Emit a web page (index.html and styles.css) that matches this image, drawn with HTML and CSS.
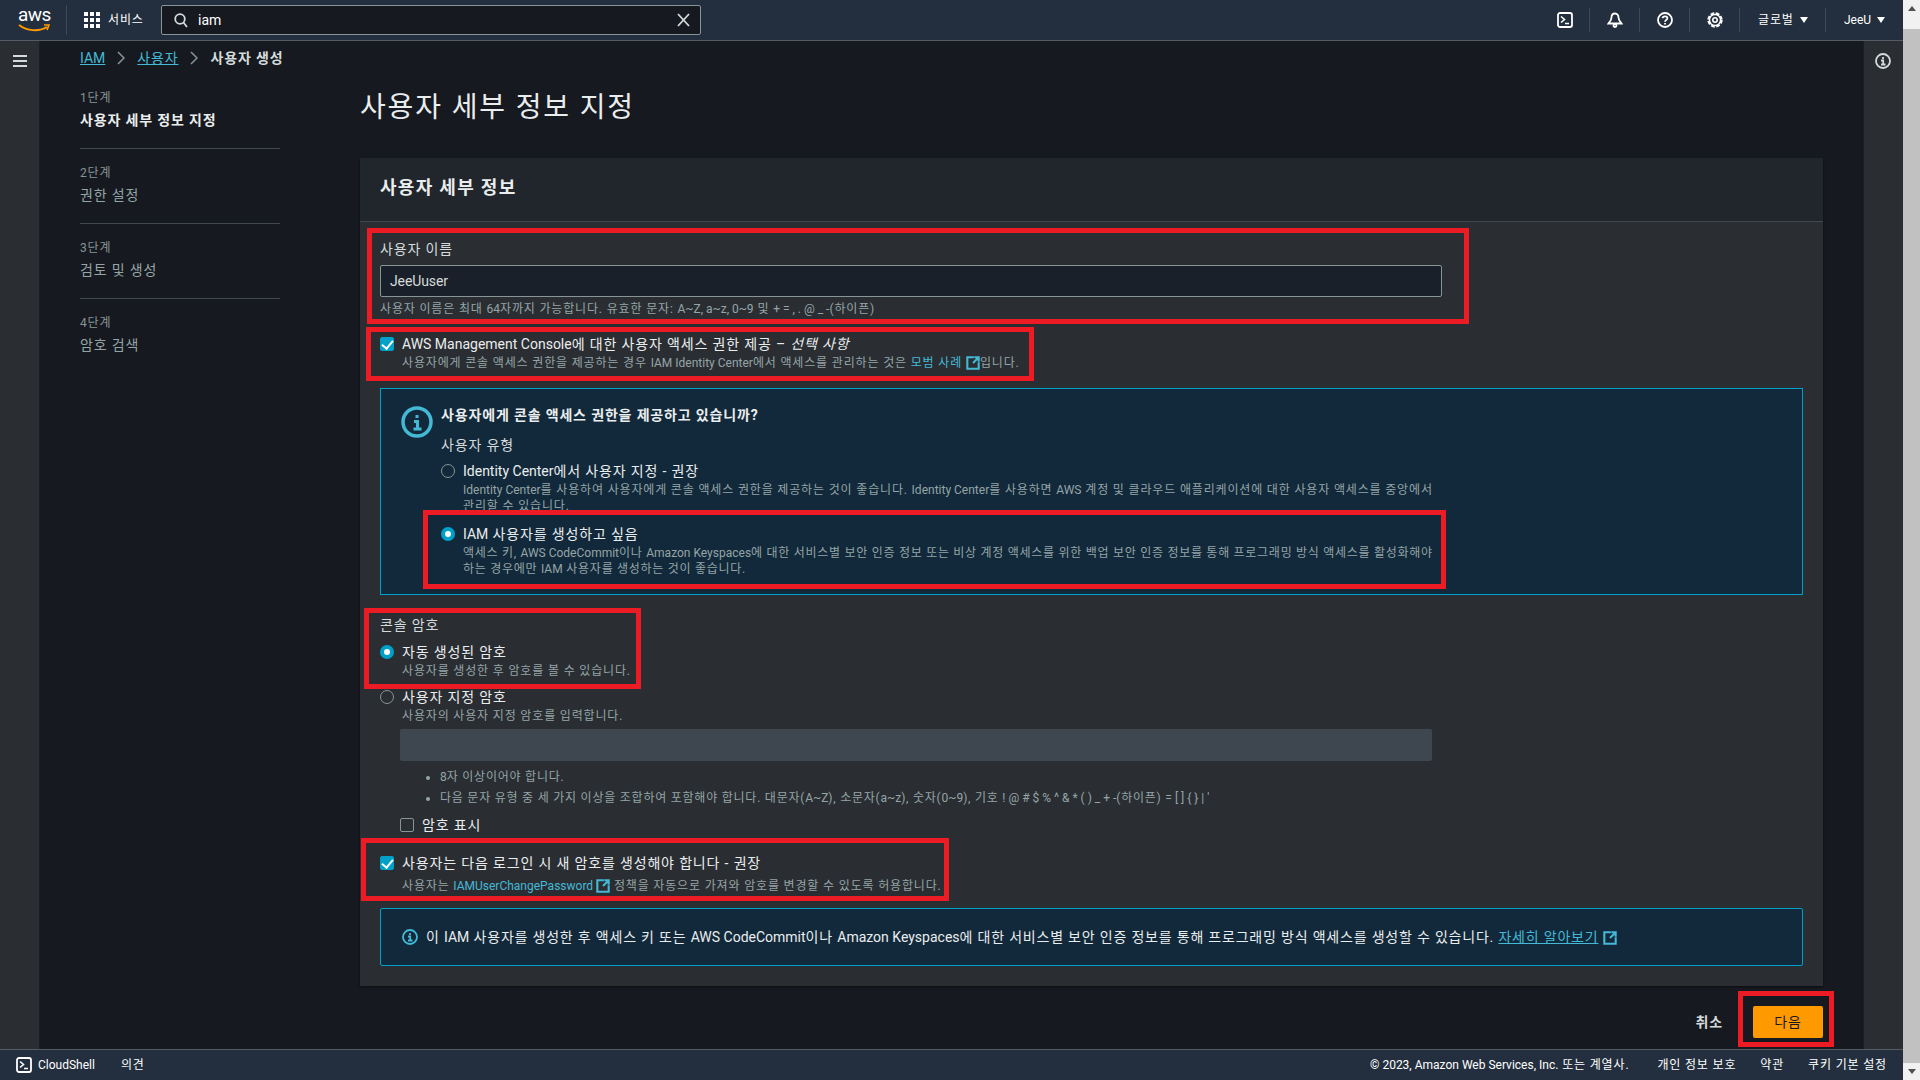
FILE: index.html
```html
<!DOCTYPE html>
<html lang="ko">
<head>
    <meta charset="UTF-8">
    <meta name="viewport" content="width=device-width, initial-scale=1.0">
    <title>사용자 생성</title>
    <link rel="stylesheet" href="styles.css">
</head>
<body>

<svg class="defs" width="0" height="0">
    <symbol id="ext" viewBox="0 0 16 16">
        <path d="M9 1.500H1.500v13h13V7M8 8l6-6M9.500 1.500h5v5" fill="none" stroke="currentColor" stroke-width="2.400"/>
    </symbol>
    <symbol id="shell" viewBox="0 0 16 16">
        <rect x="1" y="1" width="14" height="14" rx="2" fill="none" stroke="currentColor" stroke-width="1.800"/>
        <path d="M4 4.500 7.500 7.500 4 10.500M8 11.500h4" fill="none" stroke="currentColor" stroke-width="1.600"/>
    </symbol>
</svg>

<div class="page">
    <header class="topbar">
        <div class="logo">
            <span class="logo-text">aws</span>
            <svg class="logo-smile" width="32" height="9" viewBox="0 0 32 9"><path d="M1 1c8 6 20 7 28 2" fill="none" stroke="#f90" stroke-width="2"/><path d="M26 1l5 0-2 5" fill="none" stroke="#f90" stroke-width="1.600"/></svg>
        </div>
        <div class="services">
            <svg width="16" height="16" viewBox="0 0 16 16" fill="#fff">
                <rect width="4" height="4"/><rect x="6" width="4" height="4"/><rect x="12" width="4" height="4"/>
                <rect y="6" width="4" height="4"/><rect x="6" y="6" width="4" height="4"/><rect x="12" y="6" width="4" height="4"/>
                <rect y="12" width="4" height="4"/><rect x="6" y="12" width="4" height="4"/><rect x="12" y="12" width="4" height="4"/>
            </svg>
            <span>서비스</span>
        </div>
        <div class="search">
            <svg width="14" height="15" viewBox="0 0 14 15" fill="none" stroke="#d5dbdb" stroke-width="1.800"><circle cx="6" cy="6" r="4.800"/><path d="M9.500 9.500 13 14"/></svg>
            <span class="search-text en">iam</span>
            <svg class="search-clear" width="13" height="14" viewBox="0 0 13 14" fill="none" stroke="#d5dbdb" stroke-width="1.800"><path d="M1 1l11 12M12 1 1 13"/></svg>
        </div>
        <nav class="top-right">
            <div class="top-icon first"><svg class="icon-white" width="16" height="16"><use href="#shell"/></svg></div>
            <div class="top-icon">
                <svg width="16" height="16" viewBox="0 0 16 16" fill="none" stroke="#fff" stroke-width="1.800"><path d="M8 1.500c-2.400 0-3.500 2-3.500 4 0 2.500-1.500 4-3 6h13c-1.500-2-3-3.500-3-6 0-2-1.100-4-3.500-4Z"/><circle cx="8" cy="13.500" r="1.500"/></svg>
            </div>
            <div class="top-icon">
                <svg width="16" height="16" viewBox="0 0 16 16" fill="none" stroke="#fff" stroke-width="1.800"><circle cx="8" cy="8" r="7"/><path d="M5.600 6.200C5.800 3.600 10.400 3.700 10.400 6.200 10.400 7.900 8 7.900 8 9.800"/><path d="M8 11v1.500"/></svg>
            </div>
            <div class="top-icon">
                <svg width="16" height="16" viewBox="0 0 16 16" fill="none" stroke="#fff"><circle cx="8" cy="8" r="6.500" stroke-width="2.400" stroke-dasharray="3.600 1.500"/><circle cx="8" cy="8" r="5.500" stroke-width="1.400"/><circle cx="8" cy="8" r="2.200" stroke-width="1.600"/></svg>
            </div>
            <div class="top-menu region">글로벌<span class="caret"></span></div>
            <div class="top-menu user"><span class="en">JeeU</span><span class="caret"></span></div>
        </nav>
    </header>

    <div class="middle">
        <aside class="rail">
            <svg width="14" height="12" viewBox="0 0 14 12" fill="#d5dbdb"><rect width="14" height="2"/><rect y="5" width="14" height="2"/><rect y="10" width="14" height="2"/></svg>
        </aside>

        <main class="main">
            <div class="breadcrumb">
                <a class="en" href="#">IAM</a>
                <svg class="crumb-sep" width="8" height="14" viewBox="0 0 8 14"><path d="M1 1l6 6-6 6" fill="none" stroke="#879596" stroke-width="1.500"/></svg>
                <a href="#">사용자</a>
                <svg class="crumb-sep" width="8" height="14" viewBox="0 0 8 14"><path d="M1 1l6 6-6 6" fill="none" stroke="#879596" stroke-width="1.500"/></svg>
                <span class="crumb-now">사용자 생성</span>
            </div>

            <div class="wizard">
                <ol class="steps">
                    <li class="step active"><small>1단계</small><span>사용자 세부 정보 지정</span></li>
                    <li class="step"><small>2단계</small><span>권한 설정</span></li>
                    <li class="step"><small>3단계</small><span>검토 및 생성</span></li>
                    <li class="step"><small>4단계</small><span>암호 검색</span></li>
                </ol>

                <section class="content">
                    <h1>사용자 세부 정보 지정</h1>

                    <div class="panel">
                        <h2 class="panel-head">사용자 세부 정보</h2>
                        <div class="panel-body">
                            <label class="field-label">사용자 이름</label>
                            <input class="text-input" type="text" value="JeeUuser">
                            <p class="hint">사용자 이름은 최대 <span class="en">64</span>자까지 가능합니다. 유효한 문자: <span class="en">A~Z, a~z, 0~9</span> 및 <span class="en">+ = , . @ _ -</span>(하이픈)</p>

                            <div class="option console-access">
                                <input type="checkbox" checked>
                                <div>
                                    <div class="option-title"><span class="en">AWS Management Console</span>에 대한 사용자 액세스 권한 제공 – <em>선택 사항</em></div>
                                    <p class="sub">사용자에게 콘솔 액세스 권한을 제공하는 경우 <span class="en">IAM Identity Center</span>에서 액세스를 관리하는 것은 <a href="#">모범 사례 <svg class="ext" width="14" height="14"><use href="#ext"/></svg></a>입니다.</p>
                                </div>
                            </div>

                            <div class="info-box">
                                <svg class="info-big" width="32" height="32" viewBox="0 0 32 32" fill="none" stroke="#44b9d6" stroke-width="3.500"><circle cx="16" cy="16" r="14"/><path d="M16 9v3M13 15.500h3.500v7M12.500 23h8" stroke-width="3"/></svg>
                                <div class="info-main">
                                    <div class="info-title">사용자에게 콘솔 액세스 권한을 제공하고 있습니까?</div>
                                    <div class="user-type">사용자 유형</div>
                                    <div class="option identity">
                                        <input type="radio" name="usertype">
                                        <div>
                                            <div class="option-title"><span class="en">Identity Center</span>에서 사용자 지정 - 권장</div>
                                            <p class="sub"><span class="en">Identity Center</span>를 사용하여 사용자에게 콘솔 액세스 권한을 제공하는 것이 좋습니다. <span class="en">Identity Center</span>를 사용하면 <span class="en">AWS</span> 계정 및 클라우드 애플리케이션에 대한 사용자 액세스를 중앙에서<br>관리할 수 있습니다.</p>
                                        </div>
                                    </div>
                                    <div class="option iam-user">
                                        <input type="radio" name="usertype" checked>
                                        <div>
                                            <div class="option-title"><span class="en">IAM</span> 사용자를 생성하고 싶음</div>
                                            <p class="sub">액세스 키, <span class="en">AWS CodeCommit</span>이나 <span class="en">Amazon Keyspaces</span>에 대한 서비스별 보안 인증 정보 또는 비상 계정 액세스를 위한 백업 보안 인증 정보를 통해 프로그래밍 방식 액세스를 활성화해야<br>하는 경우에만 <span class="en">IAM</span> 사용자를 생성하는 것이 좋습니다.</p>
                                        </div>
                                    </div>
                                </div>
                            </div>

                            <div class="field-label console-pass">콘솔 암호</div>
                            <div class="option auto-pass">
                                <input type="radio" name="pass" checked>
                                <div>
                                    <div class="option-title">자동 생성된 암호</div>
                                    <p class="sub">사용자를 생성한 후 암호를 볼 수 있습니다.</p>
                                </div>
                            </div>
                            <div class="option custom-pass">
                                <input type="radio" name="pass">
                                <div>
                                    <div class="option-title">사용자 지정 암호</div>
                                    <p class="sub">사용자의 사용자 지정 암호를 입력합니다.</p>
                                </div>
                            </div>
                            <div class="pass-block">
                                <div class="pass-input"></div>
                                <ul class="rules">
                                    <li><span class="en">8</span>자 이상이어야 합니다.</li>
                                    <li>다음 문자 유형 중 세 가지 이상을 조합하여 포함해야 합니다. 대문자(<span class="en">A~Z</span>), 소문자(<span class="en">a~z</span>), 숫자(<span class="en">0~9</span>), 기호 <span class="en">! @ # $ % ^ &amp; * ( ) _ + -</span>(하이픈) <span class="en">= [ ] { } | '</span></li>
                                </ul>
                                <div class="option show-pass">
                                    <input type="checkbox">
                                    <div class="option-title">암호 표시</div>
                                </div>
                            </div>
                            <div class="option must-change">
                                <input type="checkbox" checked>
                                <div>
                                    <div class="option-title">사용자는 다음 로그인 시 새 암호를 생성해야 합니다 - 권장</div>
                                    <p class="sub note">사용자는 <a class="en" href="#">IAMUserChangePassword <svg class="ext" width="14" height="14"><use href="#ext"/></svg></a> 정책을 자동으로 가져와 암호를 변경할 수 있도록 허용합니다.</p>
                                </div>
                            </div>

                            <div class="alert">
                                <svg width="16" height="16" viewBox="0 0 16 16" fill="none" stroke="#44b9d6" stroke-width="1.800"><circle cx="8" cy="8" r="7"/><path d="M8 4v2M6 7.500h2.200v4M6 11.500h4.500"/></svg>
                                <span>이 <span class="en">IAM</span> 사용자를 생성한 후 액세스 키 또는 <span class="en">AWS CodeCommit</span>이나 <span class="en">Amazon Keyspaces</span>에 대한 서비스별 보안 인증 정보를 통해 프로그래밍 방식 액세스를 생성할 수 있습니다. <a class="learn" href="#">자세히 알아보기</a> <svg class="ext" width="14" height="14"><use href="#ext"/></svg></span>
                            </div>
                        </div>
                    </div>

                    <div class="actions">
                        <span class="cancel">취소</span>
                        <button class="next">다음</button>
                    </div>
                </section>
            </div>
        </main>

        <aside class="rail rail-right">
            <svg width="16" height="16" viewBox="0 0 16 16" fill="none" stroke="#d5dbdb" stroke-width="1.800"><circle cx="8" cy="8" r="7"/><path d="M8 4v2M6 7.500h2.200v4M6 11.500h4.500"/></svg>
        </aside>
    </div>

    <footer class="footer">
        <div class="foot-left">
            <svg class="icon-white" width="16" height="16"><use href="#shell"/></svg>
            <span class="foot-shell en">CloudShell</span>
            <span>의견</span>
        </div>
        <div class="foot-right">
            <span class="copyright"><span class="en">© 2023, Amazon Web Services, Inc.</span> 또는 계열사.</span>
            <span>개인 정보 보호</span>
            <span>약관</span>
            <span>쿠키 기본 설정</span>
        </div>
    </footer>
</div>

<div class="scrollbar">
    <div class="arrow up"></div>
    <div class="thumb"></div>
    <div class="arrow down"></div>
</div>

<!-- red annotation boxes drawn on top of the screenshot -->
<div class="mark mark-name"></div>
<div class="mark mark-console"></div>
<div class="mark mark-iam"></div>
<div class="mark mark-auto"></div>
<div class="mark mark-change"></div>
<div class="mark mark-next"></div>

</body>
</html>
```

FILE: styles.css
```css
* {
    margin: 0;
    padding: 0;
    box-sizing: border-box;
}

body {
    display: flex;
    width: 1920px;
    height: 1080px;
    overflow: hidden;
    background-color: #16191f;
    color: #d5dbdb;
    font-family: "Roboto", "Noto Sans CJK KR", sans-serif;
    font-size: 14px;
    line-height: 20px;
    letter-spacing: 0.84px; /* hangul runs wider in the reference */
}

/* latin runs keep normal spacing */
.en {
    letter-spacing: 0;
}

a {
    color: #44b9d6;
    text-decoration: none;
}

.defs {
    position: absolute;
}

.page {
    flex: 1;
    display: flex;
    flex-direction: column;
    min-width: 0;
}

/* top navigation */
.topbar {
    height: 41px;
    flex-shrink: 0;
    display: flex;
    align-items: center;
    background-color: #232f3e;
    border-bottom: 1px solid #545b64;
    color: #fff;
}

.logo {
    width: 67px;
    height: 30px;
    padding-left: 18px;
    border-right: 1px solid #414750;
}

.logo-text {
    display: block;
    height: 19px;
    font-size: 19px;
    line-height: 19px;
    font-weight: 400;
    letter-spacing: -0.5px;
}

.logo-smile {
    display: block;
}

.services {
    display: flex;
    align-items: center;
    gap: 8px;
    margin-left: 17px;
    width: 77px;
    font-size: 12px;
}

.search {
    width: 540px;
    height: 30px;
    display: flex;
    align-items: center;
    padding: 0 10px 0 12px;
    background-color: #16191f;
    border: 1px solid #879596;
    border-radius: 2px;
}

.search-text {
    margin-left: 10px;
    flex: 1;
}

.top-right {
    margin-left: auto;
    display: flex;
    align-items: center;
    height: 24px;
}

.top-icon {
    width: 50px;
    height: 24px;
    display: flex;
    align-items: center;
    justify-content: center;
    border-left: 1px solid #414750;
}

.top-icon.first {
    border-left-color: transparent;
}

.icon-white {
    color: #fff;
}

.top-menu {
    height: 24px;
    display: flex;
    align-items: center;
    border-left: 1px solid #414750;
    font-size: 12px;
}

.region {
    padding-left: 18px;
    width: 86px;
}

.user {
    padding-left: 18px;
    width: 78px;
}

.caret {
    margin-left: 6px;
    border-left: 4px solid transparent;
    border-right: 4px solid transparent;
    border-top: 6px solid #fff;
}

/* middle area */
.middle {
    flex: 1;
    min-height: 0;
    display: flex;
}

.rail {
    width: 40px;
    flex-shrink: 0;
    padding-top: 14px;
    display: flex;
    justify-content: center;
    align-items: flex-start;
    background-color: #2a2e33;
    border-right: 1px solid #1b1e23;
}

.rail-right {
    border-right: 0;
    border-left: 1px solid #1b1e23;
    padding-top: 12px;
    padding-right: 2px;
}

.main {
    flex: 1;
    min-width: 0;
    padding: 0 40px;
    overflow: hidden;
}

.breadcrumb {
    height: 34px;
    display: flex;
    align-items: center;
}

.breadcrumb a {
    text-decoration: underline;
}

.crumb-sep {
    margin: 0 12px;
}

.crumb-now {
    font-weight: 700;
}

.wizard {
    display: flex;
    gap: 80px;
}

.steps {
    width: 200px;
    flex-shrink: 0;
    margin-top: -1px;
    list-style: none;
}

.step {
    height: 75px;
    padding-top: 14px;
    border-bottom: 1px solid #414750;
    color: #95a5a6;
}

.step:last-child {
    border-bottom: 0;
}

.step small {
    display: block;
    font-size: 12px;
    color: #879596;
}

.step span {
    display: block;
    margin-top: 2px;
}

.step.active span {
    font-weight: 700;
    color: #eaeded;
}

.content {
    flex: 1;
    min-width: 0;
}

h1 {
    margin-top: 15px;
    margin-bottom: 32px;
    font-size: 28px;
    line-height: 36px;
    font-weight: 400;
    letter-spacing: 1.85px;
    color: #eaeded;
}

/* main panel */
.panel {
    background-color: #2a2e33;
    box-shadow: 0 1px 2px rgba(0, 0, 0, 0.5);
}

.panel-head {
    height: 64px;
    padding: 18px 20px 0;
    font-size: 18px;
    line-height: 24px;
    font-weight: 700;
    letter-spacing: 1.3px;
    color: #eaeded;
    background-color: #21252c;
    border-bottom: 1px solid #414750;
}

.panel-body {
    padding: 17px 20px 20px;
}

.field-label {
    display: block;
    color: #d5dbdb;
}

.text-input {
    display: block;
    width: 1062px;
    height: 32px;
    margin-top: 6px;
    padding: 0 9px;
    background-color: #1a2029;
    border: 1px solid #879596;
    border-radius: 2px;
    color: #d5dbdb;
    font: inherit;
    letter-spacing: -0.1px;
}

.hint {
    margin-top: 4px;
    font-size: 12px;
    line-height: 16px;
    color: #95a5a6;
}

.option {
    display: flex;
    gap: 8px;
    align-items: flex-start;
}

.option input {
    appearance: none;
    flex-shrink: 0;
    position: relative;
    width: 14px;
    height: 14px;
    margin-top: 3px;
    border: 1px solid #879596;
}

.option input[type="radio"] {
    border-radius: 50%;
}

.option input[type="radio"]:checked {
    border: 4px solid #00a1c9;
    background-color: #fff;
}

.option input[type="checkbox"] {
    border-radius: 2px;
}

.option input[type="checkbox"]:checked {
    background-color: #00a1c9;
    border-color: #00a1c9;
}

.option input[type="checkbox"]:checked::after {
    content: "";
    position: absolute;
    left: 3px;
    top: 0;
    width: 5px;
    height: 9px;
    border: solid #fff;
    border-width: 0 2px 2px 0;
    transform: rotate(40deg);
}

.option-title {
    color: #eaeded;
}

.sub {
    margin-top: 1px;
    font-size: 12px;
    line-height: 16px;
    color: #95a5a6;
    white-space: nowrap;
}

.ext {
    vertical-align: -3px;
    color: #44b9d6;
}

.console-access {
    margin-top: 17px;
}

.info-box {
    display: flex;
    gap: 8px;
    height: 207px;
    margin-top: 17px;
    padding: 16px 19px 16px 20px;
    background-color: #12293b;
    border: 1px solid #00a1c9;
}

.info-big {
    flex-shrink: 0;
    margin-top: 1px;
}

.info-title {
    font-weight: 700;
    color: #eaeded;
}

.user-type {
    margin-top: 10px;
}

.identity {
    margin-top: 6px;
    height: 52px;
    overflow: hidden;
}

.iam-user {
    margin-top: 11px;
}

.iam-user .sub {
    letter-spacing: 0.72px;
}

.console-pass {
    margin-top: 20px;
}

.auto-pass {
    margin-top: 7px;
}

.custom-pass {
    margin-top: 8px;
}

.pass-block {
    padding-left: 20px;
}

.pass-input {
    width: 1032px;
    height: 32px;
    margin-top: 5px;
    background-color: #3e4650;
    border-radius: 2px;
}

.rules {
    margin-top: 8px;
    padding-left: 40px;
    font-size: 12px;
    line-height: 16px;
    letter-spacing: 0.77px;
    color: #95a5a6;
}

.rules li + li {
    margin-top: 5px;
}

.show-pass {
    margin-top: 9px;
}

.must-change {
    margin-top: 18px;
}

.sub.note {
    margin-top: 5px;
}

.alert {
    display: flex;
    align-items: center;
    gap: 8px;
    height: 58px;
    margin-top: 14px;
    padding: 0 21px;
    background-color: #12293b;
    border: 1px solid #00a1c9;
    border-radius: 2px;
    color: #eaeded;
    letter-spacing: 0.8px;
}

.learn {
    text-decoration: underline;
}

.actions {
    display: flex;
    justify-content: flex-end;
    align-items: center;
    gap: 30px;
    margin-top: 20px;
}

.cancel {
    font-weight: 700;
}

.next {
    width: 70px;
    height: 32px;
    background-color: #f90;
    border: 0;
    border-radius: 2px;
    color: #16191f;
    font: inherit;
    letter-spacing: inherit;
}

/* footer */
.footer {
    height: 31px;
    flex-shrink: 0;
    display: flex;
    justify-content: space-between;
    align-items: center;
    padding: 0 16px;
    background-color: #232f3e;
    border-top: 1px solid #545b64;
    color: #fff;
    font-size: 12px;
}

.foot-left,
.foot-right {
    display: flex;
    align-items: center;
}

.foot-shell {
    margin: 0 26px 0 6px;
}

.foot-right {
    gap: 24px;
}

.copyright {
    margin-right: 4px;
}

/* browser scrollbar */
.scrollbar {
    width: 17px;
    flex-shrink: 0;
    display: flex;
    flex-direction: column;
    background-color: #f1f1f1;
}

.arrow {
    height: 17px;
    flex-shrink: 0;
    display: flex;
    justify-content: center;
    align-items: center;
}

.arrow::after {
    content: "";
    border-left: 4px solid transparent;
    border-right: 4px solid transparent;
}

.arrow.up::after {
    border-bottom: 5px solid #505050;
}

.arrow.down::after {
    border-top: 5px solid #505050;
}

.thumb {
    flex: 1;
    margin-top: 12px;
    background-color: #c1c1c1;
}

/* red annotation boxes */
.mark {
    position: absolute;
    border: 5px solid #ed1c24;
}

.mark-name {
    left: 367px;
    top: 228px;
    width: 1102px;
    height: 96px;
}

.mark-console {
    left: 366px;
    top: 327px;
    width: 668px;
    height: 54px;
}

.mark-iam {
    left: 423px;
    top: 510px;
    width: 1023px;
    height: 79px;
}

.mark-auto {
    left: 364px;
    top: 608px;
    width: 277px;
    height: 81px;
}

.mark-change {
    left: 361px;
    top: 838px;
    width: 588px;
    height: 63px;
}

.mark-next {
    left: 1738px;
    top: 991px;
    width: 96px;
    height: 56px;
}
```
